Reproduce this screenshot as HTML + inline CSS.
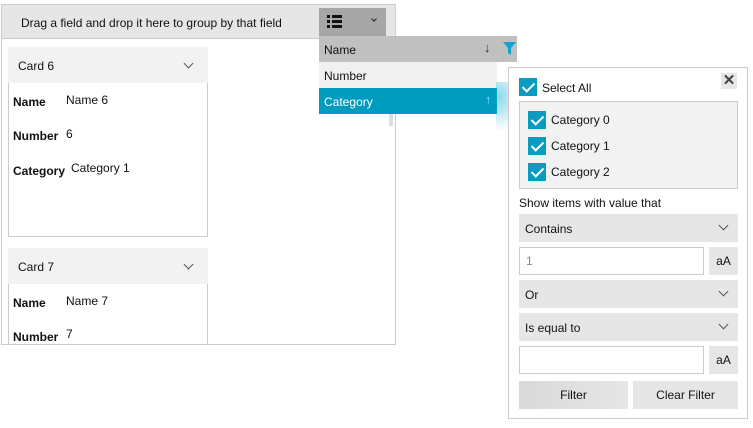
<!DOCTYPE html>
<html><head><style>
*{box-sizing:border-box;margin:0;padding:0}
body{width:753px;height:428px;background:#fff;position:relative;overflow:hidden;font-family:"Liberation Sans",sans-serif;font-size:12px;color:#111}
.a{position:absolute}
.t{position:absolute;white-space:nowrap}
.chev{position:absolute;width:7px;height:7px;border-right:1.3px solid #555;border-bottom:1.3px solid #555;transform:rotate(45deg)}
.cb{position:absolute;width:18px;height:18px;background:#0a9cc0}
.cb:after{content:"";position:absolute;left:6px;top:2px;width:5px;height:10px;border-right:2px solid #fff;border-bottom:2px solid #fff;transform:rotate(45deg)}
.b{font-weight:bold}
</style></head><body>
<div class="a" style="left:1px;top:4px;width:395px;height:341px;border:1px solid #ccc"></div>
<div class="a" style="left:2px;top:5px;width:393px;height:34px;background:#e6e6e6;border-bottom:1px solid #ccc"></div>
<div class="t" style="left:21px;top:16px">Drag a field and drop it here to group by that field</div>
<div class="a" style="left:319px;top:8px;width:67px;height:28px;background:#a6a6a6"></div>
<div class="a" style="left:327px;top:15px;width:3px;height:3px;background:#111"></div>
<div class="a" style="left:327px;top:20px;width:3px;height:3px;background:#111"></div>
<div class="a" style="left:327px;top:25px;width:3px;height:3px;background:#111"></div>
<div class="a" style="left:332px;top:15px;width:10px;height:3px;background:#111"></div>
<div class="a" style="left:332px;top:20px;width:10px;height:3px;background:#111"></div>
<div class="a" style="left:332px;top:25px;width:10px;height:3px;background:#111"></div>
<div class="chev" style="left:372px;top:17px;width:4px;height:4px;border-color:#222"></div>

<!-- card 6 -->
<div class="a" style="left:8px;top:47px;width:200px;height:190px;border:1px solid #ccc;border-top:none"></div>
<div class="a" style="left:8px;top:47px;width:200px;height:36px;background:#f2f2f2"></div>
<div class="t" style="left:18px;top:59px">Card 6</div>
<div class="chev" style="left:185px;top:60px"></div>
<div class="t b" style="left:13px;top:95px">Name</div><div class="t" style="left:66px;top:93px">Name 6</div>
<div class="t b" style="left:13px;top:129px">Number</div><div class="t" style="left:66px;top:127px">6</div>
<div class="t b" style="left:13px;top:164px">Category</div><div class="t" style="left:71px;top:161px">Category 1</div>
<!-- card 7 -->
<div class="a" style="left:8px;top:248px;width:200px;height:96px;border-left:1px solid #ccc;border-right:1px solid #ccc"></div>
<div class="a" style="left:8px;top:248px;width:200px;height:36px;background:#f2f2f2"></div>
<div class="t" style="left:18px;top:260px">Card 7</div>
<div class="chev" style="left:185px;top:261px"></div>
<div class="t b" style="left:13px;top:296px">Name</div><div class="t" style="left:66px;top:294px">Name 7</div>
<div class="t b" style="left:13px;top:330px">Number</div><div class="t" style="left:66px;top:327px">7</div>
<div class="a" style="left:389px;top:114px;width:4px;height:12px;background:#ddd"></div>

<!-- dropdown -->
<div class="a" style="left:319px;top:36px;width:198px;height:26px;background:#c0c0c0"></div>
<div class="t" style="left:324px;top:43px">Name</div>
<div class="t" style="left:484px;top:40px;font-size:13px;color:#333">↓</div>
<svg class="a" style="left:503px;top:42px" width="13" height="13"><path d="M0 0H13L8 6V13L5 11V6Z" fill="#0aa6d0"/></svg>
<div class="a" style="left:319px;top:62px;width:178px;height:26px;background:#f1f1f1"></div>
<div class="t" style="left:324px;top:69px">Number</div>
<div class="a" style="left:319px;top:88px;width:178px;height:26px;background:#009cbf"></div>
<div class="t" style="left:324px;top:95px;color:#fff">Category</div>
<div class="t" style="left:485px;top:92px;color:#7fe0ff;font-size:13px">↑</div>
<div class="a" style="left:496px;top:82px;width:30px;height:50px;background:radial-gradient(ellipse at 10% 30%,rgba(0,170,210,.45),rgba(0,170,210,0) 70%)"></div>

<!-- filter panel -->
<div class="a" style="left:508px;top:67px;width:240px;height:352px;border:1px solid #ccc;background:#fff"></div>
<div class="cb" style="left:519px;top:78px"></div>
<div class="t" style="left:542px;top:81px">Select All</div>
<div class="a" style="left:721px;top:73px;width:16px;height:16px;background:#e6e6e6;font-size:15px;line-height:16px;text-align:center;font-weight:bold;color:#444">✕</div>
<div class="a" style="left:519px;top:101px;width:219px;height:88px;background:#f2f2f2;border:1px solid #ccc"></div>
<div class="cb" style="left:528px;top:111px"></div><div class="t" style="left:551px;top:113px">Category 0</div>
<div class="cb" style="left:528px;top:137px"></div><div class="t" style="left:551px;top:139px">Category 1</div>
<div class="cb" style="left:528px;top:163px"></div><div class="t" style="left:551px;top:165px">Category 2</div>
<div class="t" style="left:519px;top:196px">Show items with value that</div>
<div class="a" style="left:519px;top:214px;width:219px;height:28px;background:#e6e6e6"></div>
<div class="t" style="left:525px;top:222px">Contains</div><div class="chev" style="left:720px;top:222px"></div>
<div class="a" style="left:519px;top:247px;width:185px;height:28px;border:1px solid #ccc"></div>
<div class="t" style="left:526px;top:254px;color:#888">1</div>
<div class="a" style="left:709px;top:247px;width:29px;height:28px;background:#e6e6e6;text-align:center;line-height:28px">aA</div>
<div class="a" style="left:519px;top:280px;width:219px;height:28px;background:#e6e6e6"></div>
<div class="t" style="left:525px;top:288px">Or</div><div class="chev" style="left:720px;top:288px"></div>
<div class="a" style="left:519px;top:313px;width:219px;height:28px;background:#e6e6e6"></div>
<div class="t" style="left:525px;top:321px">Is equal to</div><div class="chev" style="left:720px;top:321px"></div>
<div class="a" style="left:519px;top:346px;width:185px;height:28px;border:1px solid #ccc"></div>
<div class="a" style="left:709px;top:346px;width:29px;height:28px;background:#e6e6e6;text-align:center;line-height:28px">aA</div>
<div class="a" style="left:519px;top:381px;width:109px;height:28px;background:linear-gradient(90deg,#d9d9d9,#e6e6e6);text-align:center;line-height:28px">Filter</div>
<div class="a" style="left:633px;top:381px;width:105px;height:28px;background:#e6e6e6;text-align:center;line-height:28px">Clear Filter</div>
</body></html>
